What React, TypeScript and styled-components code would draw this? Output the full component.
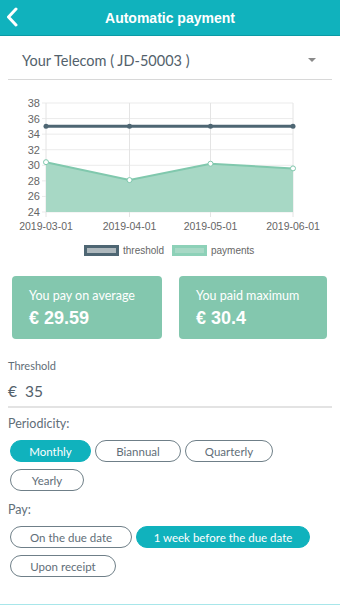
import styled, { createGlobalStyle } from 'styled-components';

const GlobalStyle = createGlobalStyle`
    html, body {
        margin: 0;
        padding: 0;
        background: #ffffff;
        font-family: Lato, "Liberation Sans", sans-serif;
    }
`;

const TEAL = '#10b2bd';

const months = ['2019-03-01', '2019-04-01', '2019-05-01', '2019-06-01'];
const xs = [46, 129.5, 210.5, 293];
const payments = [30.4, 28.1, 30.2, 29.6];
const ticks = [38, 36, 34, 32, 30, 28, 26, 24];

const yOf = (v: number) => 103 + (38 - v) * 7.786;

function Chart() {
    const pts = xs.map((x, i) => `${x},${yOf(payments[i])}`).join(' ');
    const area = `46,${yOf(24)} ${pts} 293,${yOf(24)}`;
    return (
        <ChartSvg viewBox="0 92 340 172" width="340" height="172">
            {ticks.map((t) => (
                <g key={t}>
                    <line x1="42" x2="293" y1={yOf(t)} y2={yOf(t)} stroke="#ebebeb" strokeWidth="1" />
                    <text x="40" y={yOf(t) + 4} textAnchor="end" fontSize="11" fill="#666">{t}</text>
                </g>
            ))}
            {xs.map((x, i) => (
                <g key={x}>
                    <line x1={x} x2={x} y1="103" y2="217" stroke="#e4e4e4" strokeWidth="1" />
                    <text x={x} y="230" textAnchor="middle" fontSize="10.5" fill="#666">{months[i]}</text>
                </g>
            ))}
            <polygon points={area} fill="#a7d8c5" />
            <polyline points={pts} fill="none" stroke="#80c8ad" strokeWidth="2" />
            {xs.map((x, i) => (
                <circle key={x} cx={x} cy={yOf(payments[i])} r="2.5" fill="#ffffff" stroke="#80c8ad" strokeWidth="1" />
            ))}
            <line x1="46" x2="293" y1={yOf(35)} y2={yOf(35)} stroke="#4e6673" strokeWidth="3" />
            {xs.map((x) => (
                <circle key={x} cx={x} cy={yOf(35)} r="2.5" fill="#4e6673" />
            ))}
            <rect x="85.5" y="246.5" width="32" height="8" fill="#aeb8bd" stroke="#4e6673" strokeWidth="3" />
            <text x="123" y="254" fontSize="10" fill="#666">threshold</text>
            <rect x="173.5" y="246.5" width="32" height="8" fill="#a7d8c5" stroke="#8dd1b8" strokeWidth="3" />
            <text x="211" y="254" fontSize="10" fill="#666">payments</text>
        </ChartSvg>
    );
}

const periods = [
    { label: 'Monthly', w: 81 },
    { label: 'Biannual', w: 86 },
    { label: 'Quarterly', w: 88 },
    { label: 'Yearly', w: 74 },
];
const payOptions = [
    { label: 'On the due date', w: 122 },
    { label: '1 week before the due date', w: 174 },
    { label: 'Upon receipt', w: 106 },
];

export default function App() {
    return (
        <Page>
            <GlobalStyle />
            <Header>
                <BackIcon width="12" height="20" viewBox="0 0 12 20">
                    <polyline points="10,2 2.5,10 10,18" fill="none" stroke="#ffffff" strokeWidth="3" strokeLinecap="round" strokeLinejoin="round" />
                </BackIcon>
                <Title>Automatic payment</Title>
            </Header>
            <Select>
                <SelectText>Your Telecom ( JD-50003 )</SelectText>
                <Caret />
            </Select>
            <Chart />
            <Cards>
                <Card>
                    <CardLabel>You pay on average</CardLabel>
                    <CardValue>€ 29.59</CardValue>
                </Card>
                <Card>
                    <CardLabel>You paid maximum</CardLabel>
                    <CardValue>€ 30.4</CardValue>
                </Card>
            </Cards>
            <Field>
                <FieldLabel>Threshold</FieldLabel>
                <FieldValue>€&nbsp; 35</FieldValue>
            </Field>
            <SectionLabel>Periodicity:</SectionLabel>
            <Chips>
                {periods.map((p) => (
                    <Chip key={p.label} $w={p.w} $active={p.label === 'Monthly'}>{p.label}</Chip>
                ))}
            </Chips>
            <SectionLabel $top={11}>Pay:</SectionLabel>
            <Chips>
                {payOptions.map((p) => (
                    <Chip key={p.label} $w={p.w} $active={p.label === '1 week before the due date'}>{p.label}</Chip>
                ))}
            </Chips>
            <BottomLine />
        </Page>
    );
}

const Page = styled.div`
    width: 340px;
    height: 605px;
    position: relative;
    overflow: hidden;
    display: flex;
    flex-direction: column;
`;

const Header = styled.header`
    height: 35px;
    background-color: ${TEAL};
    border-bottom: 1px solid #0a9aa5;
    display: flex;
    align-items: center;
    justify-content: center;
    position: relative;
`;

const BackIcon = styled.svg`
    position: absolute;
    left: 6px;
    top: 7px;
`;

const Title = styled.h1`
    margin: 0;
    color: #ffffff;
    font-family: "Liberation Sans", Arial, sans-serif;
    font-size: 14px;
    font-weight: bold;
`;

const Select = styled.div`
    margin: 0 8px;
    height: 44px;
    box-sizing: border-box;
    border-bottom: 1px solid #d8d8d8;
    display: flex;
    align-items: center;
    justify-content: space-between;
    padding: 6px 14px 0;
`;

const SelectText = styled.span`
    font-size: 14.5px;
    color: #53616b;
`;

const Caret = styled.span`
    width: 0;
    height: 0;
    border-left: 4px solid transparent;
    border-right: 4px solid transparent;
    border-top: 4px solid #8a8a8a;
    margin-right: 2px;
    margin-bottom: 2px;
`;

const ChartSvg = styled.svg`
    display: block;
    margin-top: 12px;
    font-family: "Liberation Sans", Arial, sans-serif;
`;

const Cards = styled.div`
    display: grid;
    grid-template-columns: 150px 148px;
    column-gap: 17px;
    padding: 0 12px;
    margin-top: 12px;
`;

const Card = styled.div`
    height: 63px;
    background-color: #83c7ae;
    border-radius: 4px;
    padding: 12px 0 0 17px;
    box-sizing: border-box;
    color: #ffffff;
`;

const CardLabel = styled.div`
    font-size: 12.5px;
    line-height: 15px;
`;

const CardValue = styled.div`
    font-family: "Liberation Sans", Arial, sans-serif;
    font-size: 18px;
    line-height: 22px;
    font-weight: bold;
    margin-top: 4px;
`;

const Field = styled.div`
    margin: 20px 8px 0;
    border-bottom: 2px solid #e3e3e3;
    padding-bottom: 6px;
`;

const FieldLabel = styled.div`
    font-size: 11px;
    line-height: 14px;
    color: #5f6e78;
`;

const FieldValue = styled.div`
    font-size: 15.5px;
    line-height: 18px;
    color: #53616b;
    margin-top: 9px;
`;

const SectionLabel = styled.div<{ $top?: number }>`
    font-size: 12.5px;
    line-height: 16px;
    color: #5f6e78;
    margin: ${(p) => p.$top ?? 8}px 8px 0;
`;

const Chips = styled.div`
    display: flex;
    flex-wrap: wrap;
    column-gap: 4px;
    row-gap: 7px;
    padding: 0 10px;
    margin-top: 8px;
`;

const Chip = styled.div<{ $active?: boolean; $w: number }>`
    width: ${(p) => p.$w}px;
    height: 22px;
    box-sizing: border-box;
    border-radius: 11px;
    border: 1px solid ${(p) => (p.$active ? TEAL : '#6f7f88')};
    background-color: ${(p) => (p.$active ? TEAL : '#ffffff')};
    color: ${(p) => (p.$active ? '#ffffff' : '#5f6e78')};
    font-size: 11.5px;
    display: flex;
    align-items: center;
    justify-content: center;
`;

const BottomLine = styled.div`
    margin-top: auto;
    height: 1px;
    background-color: #a8e6ea;
`;
